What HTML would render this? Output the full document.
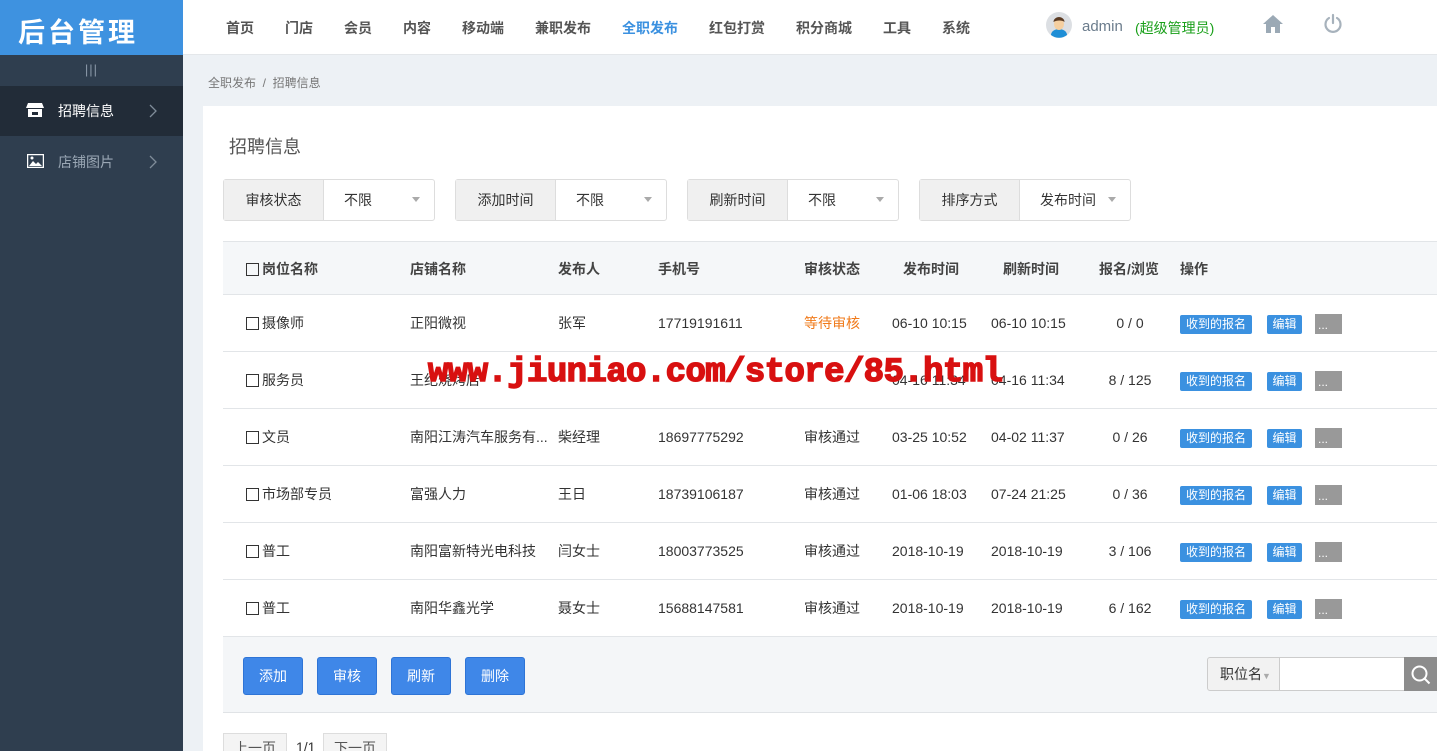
<!DOCTYPE html>
<html><head><meta charset="utf-8"><style>
*{margin:0;padding:0;box-sizing:border-box}
html{width:1437px;height:751px;overflow:hidden}
body{width:1437px;height:751px;overflow:hidden;font-family:"Liberation Sans","Noto Sans CJK SC",sans-serif;background:#edf1f5;position:relative;font-size:14px;color:#333}
.abs{position:absolute}
#side{left:0;top:0;width:183px;height:751px;background:#2f3e4f}
#logo{left:0;top:0;width:183px;height:55px;background:#3e92e0;color:#fff;font-size:27px;font-weight:bold;letter-spacing:3px;padding:11px 0 0 18px}
#top{left:183px;top:0;width:1254px;height:55px;background:#fff;border-bottom:1px solid #e4e7ea}
.nav{top:18px;font-size:14px;font-weight:bold;color:#555}
.card{left:203px;top:106px;width:1234px;height:645px;background:#fff}
.fl{top:179px;height:42px;border:1px solid #ddd;border-radius:3px;background:#fff;font-size:14px}
.fl .l{position:absolute;left:0;top:0;width:100px;height:40px;background:#f0f0f0;text-align:center;line-height:40px;border-right:1px solid #ddd}
.fl .v{position:absolute;left:120px;top:0;line-height:40px}
.fl .a{position:absolute;right:14px;top:17px;border-left:4px solid transparent;border-right:4px solid transparent;border-top:5px solid #aaa}
.row{left:223px;width:1214px;height:57px;border-bottom:1px solid #e2e5e8}
.c{position:absolute;top:0;line-height:57px;font-size:14px;color:#333}
.hd .c{font-weight:bold;color:#444}
.cb{display:inline-block;width:13px;height:13px;border:1px solid #333;vertical-align:-2px;margin-right:3px}
.b1{position:absolute;top:20px;left:957px;width:72px;height:19px;background:#3b91e0;color:#fff;font-size:12px;text-align:center;line-height:19px;border-radius:2px}
.b2{position:absolute;top:20px;left:1044px;width:35px;height:19px;background:#3b91e0;color:#fff;font-size:12px;text-align:center;line-height:19px;border-radius:2px}
.b3{position:absolute;top:19px;left:1092px;width:27px;height:20px;background:#999;color:#fff;font-size:12px;line-height:22px;padding-left:3px}
.btn{top:657px;width:60px;height:38px;background:#3f87e8;border:1px solid #2e74d6;border-radius:3px;color:#fff;text-align:center;line-height:36px;font-size:14px}
</style></head><body>
<div id="side" class="abs"></div>
<div id="logo" class="abs">后台管理</div>
<div class="abs" style="left:0;top:62px;width:183px;text-align:center;color:#8a98a8;font-size:13px;letter-spacing:1px">|||</div>
<div class="abs" style="left:0;top:86px;width:183px;height:50px;background:#222c38"></div>
<svg class="abs" style="left:26px;top:102px" width="18" height="16" viewBox="0 0 18 16"><path d="M2 1h14l2 5H0z" fill="#fff"/><rect x="2" y="7" width="14" height="8" fill="#fff"/><rect x="6" y="10" width="6" height="3" fill="#222c38"/></svg>
<div class="abs" style="left:58px;top:101px;color:#fff;font-size:14px">招聘信息</div>
<svg class="abs" style="left:149px;top:104px" width="8" height="14" viewBox="0 0 8 14"><path d="M1 1l6 6-6 6" fill="none" stroke="#7f8c99" stroke-width="1.3"/></svg>
<svg class="abs" style="left:27px;top:154px" width="17" height="14" viewBox="0 0 17 14"><rect x="0.5" y="0.5" width="16" height="13" fill="none" stroke="#fff" stroke-width="1.5"/><path d="M2 12l4-5 3 3 2-2 4 4z" fill="#fff"/><circle cx="5" cy="4" r="1.5" fill="#fff"/></svg>
<div class="abs" style="left:58px;top:152px;color:#9aa7b4;font-size:14px">店铺图片</div>
<svg class="abs" style="left:149px;top:155px" width="8" height="14" viewBox="0 0 8 14"><path d="M1 1l6 6-6 6" fill="none" stroke="#7f8c99" stroke-width="1.3"/></svg>

<div id="top" class="abs"></div>
<div class="abs nav" style="left:226px">首页</div>
<div class="abs nav" style="left:285px">门店</div>
<div class="abs nav" style="left:344px">会员</div>
<div class="abs nav" style="left:403px">内容</div>
<div class="abs nav" style="left:462px">移动端</div>
<div class="abs nav" style="left:535px">兼职发布</div>
<div class="abs nav" style="left:622px;color:#3b91e0">全职发布</div>
<div class="abs nav" style="left:709px">红包打赏</div>
<div class="abs nav" style="left:796px">积分商城</div>
<div class="abs nav" style="left:883px">工具</div>
<div class="abs nav" style="left:942px">系统</div>
<svg class="abs" style="left:1046px;top:12px" width="26" height="26" viewBox="0 0 26 26"><circle cx="13" cy="13" r="13" fill="#dcdfe3"/><path d="M5 23a8 6 0 0 1 16 0 13 13 0 0 1-16 0z" fill="#1e8ed6"/><ellipse cx="13" cy="12" rx="5" ry="6" fill="#f5cfa0"/><path d="M7.5 10a5.5 5 0 0 1 11 0c-2-2-8-2-11 0z" fill="#5a3a22"/></svg>
<div class="abs" style="left:1082px;top:18px;color:#6b7c8c;font-size:15px">admin</div>
<div class="abs" style="left:1135px;top:18px;color:#1aa01a;font-size:14px">(超级管理员)</div>
<svg class="abs" style="left:1263px;top:14px" width="20" height="20" viewBox="0 0 20 20"><path d="M10 1L0 10h3v9h5v-6h4v6h5v-9h3z" fill="#9ba9b5"/></svg>
<svg class="abs" style="left:1323px;top:13px" width="20" height="22" viewBox="0 0 20 22"><path d="M6 5a7.5 7.5 0 1 0 8 0" fill="none" stroke="#a7b2bc" stroke-width="2.2" stroke-linecap="round"/><path d="M10 2v8" stroke="#a7b2bc" stroke-width="2.2" stroke-linecap="round"/></svg>

<div class="abs" style="left:208px;top:74px;font-size:12px;color:#777">全职发布 &nbsp;/&nbsp; 招聘信息</div>
<div class="abs card"></div>
<div class="abs" style="left:229px;top:133px;font-size:18px;color:#555">招聘信息</div>

<div class="abs fl" style="left:223px;width:212px"><div class="l">审核状态</div><div class="v">不限</div><div class="a"></div></div>
<div class="abs fl" style="left:455px;width:212px"><div class="l">添加时间</div><div class="v">不限</div><div class="a"></div></div>
<div class="abs fl" style="left:687px;width:212px"><div class="l">刷新时间</div><div class="v">不限</div><div class="a"></div></div>
<div class="abs fl" style="left:919px;width:212px"><div class="l">排序方式</div><div class="v">发布时间</div><div class="a"></div></div>

<div class="abs row hd" style="top:241px;height:54px;background:#f5f7f9;border-top:1px solid #e2e5e8">
<div class="c" style="left:23px;line-height:54px"><span class="cb"></span>岗位名称</div><div class="c" style="left:187px;line-height:54px">店铺名称</div><div class="c" style="left:335px;line-height:54px">发布人</div><div class="c" style="left:435px;line-height:54px">手机号</div><div class="c" style="left:581px;line-height:54px">审核状态</div><div class="c" style="left:680px;line-height:54px">发布时间</div><div class="c" style="left:780px;line-height:54px">刷新时间</div><div class="c" style="left:876px;line-height:54px">报名/浏览</div><div class="c" style="left:957px;line-height:54px">操作</div></div>

<div class="abs row" style="top:295px"><div class="c" style="left:23px"><span class="cb"></span>摄像师</div><div class="c" style="left:187px">正阳微视</div><div class="c" style="left:335px">张军</div><div class="c" style="left:435px">17719191611</div><div class="c" style="left:581px;color:#f07a1a">等待审核</div><div class="c" style="left:669px">06-10 10:15</div><div class="c" style="left:768px">06-10 10:15</div><div class="c" style="left:876px;width:62px;text-align:center">0 / 0</div><div class="b1">收到的报名</div><div class="b2">编辑</div><div class="b3">...</div></div>
<div class="abs row" style="top:352px"><div class="c" style="left:23px"><span class="cb"></span>服务员</div><div class="c" style="left:187px">王纪烧烤店</div><div class="c" style="left:669px">04-16 11:34</div><div class="c" style="left:768px">04-16 11:34</div><div class="c" style="left:876px;width:62px;text-align:center">8 / 125</div><div class="b1">收到的报名</div><div class="b2">编辑</div><div class="b3">...</div></div>
<div class="abs row" style="top:409px"><div class="c" style="left:23px"><span class="cb"></span>文员</div><div class="c" style="left:187px">南阳江涛汽车服务有...</div><div class="c" style="left:335px">柴经理</div><div class="c" style="left:435px">18697775292</div><div class="c" style="left:581px">审核通过</div><div class="c" style="left:669px">03-25 10:52</div><div class="c" style="left:768px">04-02 11:37</div><div class="c" style="left:876px;width:62px;text-align:center">0 / 26</div><div class="b1">收到的报名</div><div class="b2">编辑</div><div class="b3">...</div></div>
<div class="abs row" style="top:466px"><div class="c" style="left:23px"><span class="cb"></span>市场部专员</div><div class="c" style="left:187px">富强人力</div><div class="c" style="left:335px">王日</div><div class="c" style="left:435px">18739106187</div><div class="c" style="left:581px">审核通过</div><div class="c" style="left:669px">01-06 18:03</div><div class="c" style="left:768px">07-24 21:25</div><div class="c" style="left:876px;width:62px;text-align:center">0 / 36</div><div class="b1">收到的报名</div><div class="b2">编辑</div><div class="b3">...</div></div>
<div class="abs row" style="top:523px"><div class="c" style="left:23px"><span class="cb"></span>普工</div><div class="c" style="left:187px">南阳富新特光电科技</div><div class="c" style="left:335px">闫女士</div><div class="c" style="left:435px">18003773525</div><div class="c" style="left:581px">审核通过</div><div class="c" style="left:669px">2018-10-19</div><div class="c" style="left:768px">2018-10-19</div><div class="c" style="left:876px;width:62px;text-align:center">3 / 106</div><div class="b1">收到的报名</div><div class="b2">编辑</div><div class="b3">...</div></div>
<div class="abs row" style="top:580px"><div class="c" style="left:23px"><span class="cb"></span>普工</div><div class="c" style="left:187px">南阳华鑫光学</div><div class="c" style="left:335px">聂女士</div><div class="c" style="left:435px">15688147581</div><div class="c" style="left:581px">审核通过</div><div class="c" style="left:669px">2018-10-19</div><div class="c" style="left:768px">2018-10-19</div><div class="c" style="left:876px;width:62px;text-align:center">6 / 162</div><div class="b1">收到的报名</div><div class="b2">编辑</div><div class="b3">...</div></div>

<div class="abs" style="left:223px;top:637px;width:1214px;height:76px;background:#f4f6f8;border-bottom:1px solid #e0e3e6"></div>
<div class="abs btn" style="left:243px">添加</div>
<div class="abs btn" style="left:317px">审核</div>
<div class="abs btn" style="left:391px">刷新</div>
<div class="abs btn" style="left:465px">删除</div>
<div class="abs" style="left:1207px;top:657px;width:73px;height:34px;background:#f2f2f2;border:1px solid #ccc;border-radius:3px 0 0 3px;line-height:32px;padding-left:12px;font-size:14px">职位名<span style="color:#aaa;font-size:9px">▼</span></div>
<div class="abs" style="left:1279px;top:657px;width:126px;height:34px;background:#fff;border:1px solid #ccc"></div>
<div class="abs" style="left:1404px;top:657px;width:33px;height:34px;background:#8c8c8c"></div>
<svg class="abs" style="left:1410px;top:664px" width="22" height="22" viewBox="0 0 22 22"><circle cx="9.5" cy="9.5" r="7" fill="none" stroke="#fff" stroke-width="2"/><path d="M14.5 14.5l5 5" stroke="#fff" stroke-width="2"/></svg>

<div class="abs" style="left:223px;top:733px;width:64px;height:18px;overflow:hidden;background:#f4f4f4;border:1px solid #ddd;border-bottom:0;text-align:center;line-height:28px;color:#555">上一页</div>
<div class="abs" style="left:296px;top:739px;height:12px;overflow:hidden;color:#333;line-height:16px">1/1</div>
<div class="abs" style="left:323px;top:733px;width:64px;height:18px;overflow:hidden;background:#f4f4f4;border:1px solid #ddd;border-bottom:0;text-align:center;line-height:28px;color:#555">下一页</div>

<div class="abs" style="left:428px;top:354px;font-family:'Liberation Mono',monospace;font-weight:bold;font-size:34px;color:#d81010;-webkit-text-stroke:1.5px #d81010;letter-spacing:-0.6px;white-space:nowrap">www.jiuniao.com/store/85.html</div>
</body></html>
